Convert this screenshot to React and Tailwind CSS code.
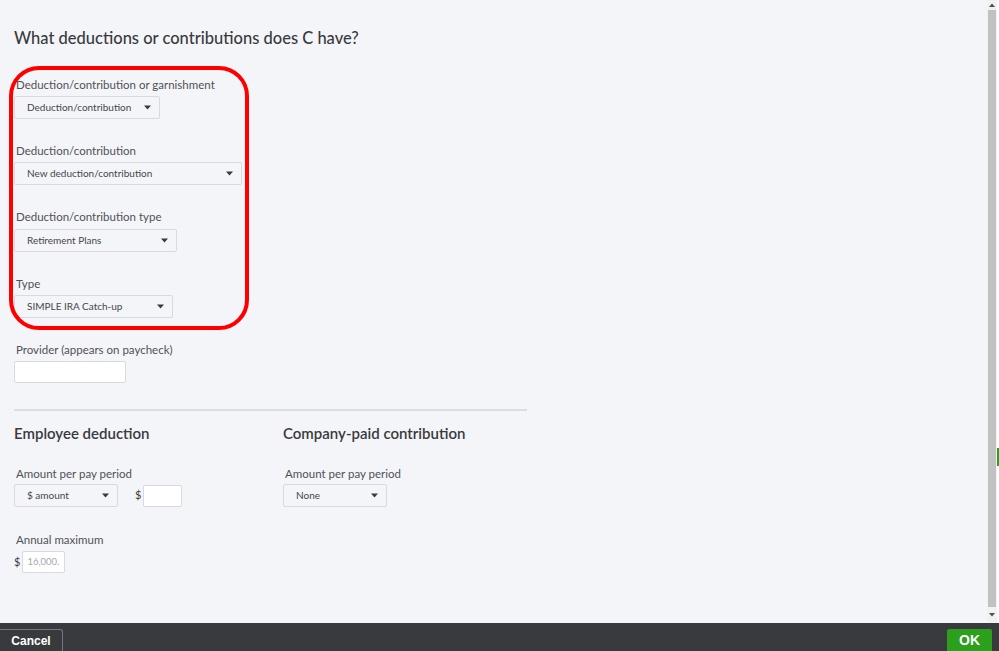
import React from "react";

const font = { fontFamily: "Lato, 'Open Sans', sans-serif" };

function Caret() {
  return (
    <svg width="7" height="5" viewBox="0 0 7 5" className="shrink-0">
      <path d="M0 0.5h7L3.5 4.5z" fill="#393a3d" />
    </svg>
  );
}

function Select({ text, w }) {
  return (
    <div
      className="h-[23px] flex items-center justify-between pl-[12px] pr-[8px] border border-[#d8dadf] rounded-[2px] bg-[#f4f5f8] text-[10px] text-[#45464a]"
      style={{ width: w }}
    >
      <span>{text}</span>
      <Caret />
    </div>
  );
}

function Label({ children, className = "" }) {
  return (
    <div className={`pl-[2px] text-[11.5px] leading-[14px] text-[#505155] ${className}`}>
      {children}
    </div>
  );
}

export default function App() {
  return (
    <div className="w-[999px] h-[651px] flex flex-col bg-[#f4f5f8] overflow-hidden" style={font}>
      <div className="flex-1 flex min-h-0">
        {/* form */}
        <div className="flex-1 relative pl-[14px] pt-[28px]">
          <h1 className="text-[16.5px] leading-[20px] font-medium text-[#393a3d]">
            What deductions or contributions does C have?
          </h1>

          <Label className="mt-[30px]">Deduction/contribution or garnishment</Label>
          <div className="mt-[4px]"><Select text="Deduction/contribution" w="146px" /></div>

          <Label className="mt-[25px]">Deduction/contribution</Label>
          <div className="mt-[4px]"><Select text="New deduction/contribution" w="228px" /></div>

          <Label className="mt-[25px]">Deduction/contribution type</Label>
          <div className="mt-[5px]"><Select text="Retirement Plans" w="163px" /></div>

          <Label className="mt-[25px]">Type</Label>
          <div className="mt-[4px]"><Select text="SIMPLE IRA Catch-up" w="159px" /></div>

          <Label className="mt-[25px]">Provider (appears on paycheck)</Label>
          <div className="mt-[4px] w-[112px] h-[22px] bg-white border border-[#d8dadf] rounded-[2px]" />

          <div className="mt-[26px] w-[513px] h-[2px] bg-[#dcdde1]" />

          <div className="flex mt-[13px]">
            <div className="w-[269px]">
              <div className="text-[15px] leading-[18px] font-semibold text-[#393a3d]">Employee deduction</div>
              <Label className="mt-[25px]">Amount per pay period</Label>
              <div className="mt-[3px] flex items-center">
                <Select text="$ amount" w="104px" />
                <span className="ml-[17px] text-[11px] text-[#393a3d]">$</span>
                <div className="ml-[2px] w-[39px] h-[22px] bg-white border border-[#d8dadf] rounded-[2px]" />
              </div>
              <Label className="mt-[26px]">Annual maximum</Label>
              <div className="mt-[4px] flex items-center">
                <span className="text-[11px] text-[#393a3d]">$</span>
                <div className="ml-[2px] w-[43px] h-[22px] bg-white border border-[#d8dadf] rounded-[2px] flex items-center pl-[4px] text-[9.5px] text-[#a7a9ad]">
                  16,000.
                </div>
              </div>
            </div>
            <div>
              <div className="text-[15px] leading-[18px] font-semibold text-[#393a3d]">Company-paid contribution</div>
              <Label className="mt-[25px]">Amount per pay period</Label>
              <div className="mt-[3px]"><Select text="None" w="104px" /></div>
            </div>
          </div>

          {/* highlight outline around the first four fields */}
          <div className="absolute left-[9px] top-[66px] w-[240px] h-[264px] border-[4px] border-[#ff0000] rounded-[30px] pointer-events-none" />
        </div>

        {/* scrollbar */}
        <div className="w-[10px] flex flex-col items-center bg-[#f1f1f1]">
          <svg width="8" height="10" viewBox="0 0 8 10"><path d="M1 7h6L4 3.5z" fill="#505050" /></svg>
          <div className="flex-1 w-[8px] bg-[#c1c1c1]" />
          <svg width="8" height="16" viewBox="0 0 8 16"><path d="M1 6h6L4 9.5z" fill="#505050" /></svg>
        </div>
        <div className="w-[2px] bg-white relative">
          <div className="absolute left-0 top-[448px] w-[2px] h-[18px] bg-[#2ca01c]" />
        </div>
      </div>

      {/* footer */}
      <div className="h-[28px] bg-[#393a3d] flex items-end justify-between pr-[7px]">
        <div className="w-[63px] h-[22px] border-t border-r border-[#75767b] rounded-tr-[3px] flex items-center justify-center text-white text-[12px] font-bold" style={{ fontFamily: "'Liberation Sans', sans-serif" }}>
          Cancel
        </div>
        <div className="w-[45px] h-[22px] bg-[#2ca01c] rounded-t-[2px] flex items-center justify-center text-white text-[14px] font-bold" style={{ fontFamily: "'Liberation Sans', sans-serif" }}>
          OK
        </div>
      </div>
    </div>
  );
}
